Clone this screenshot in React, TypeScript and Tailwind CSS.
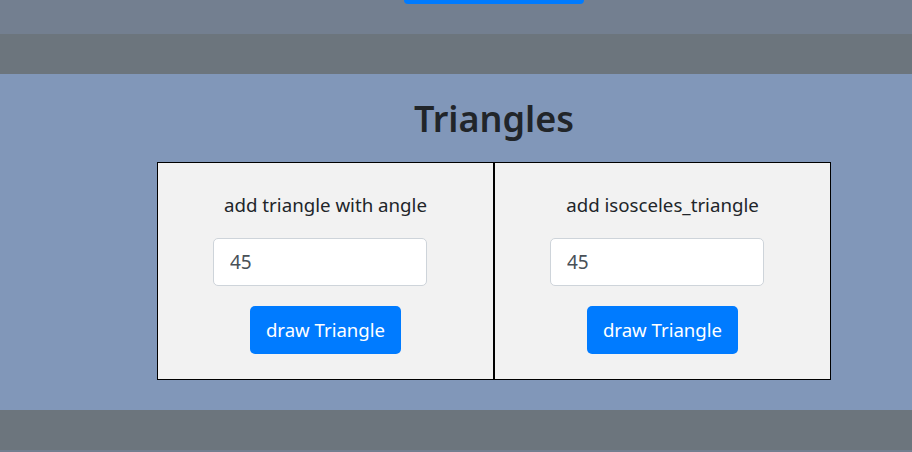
import React from "react";

function Card({ label }: { label: string }) {
  return (
    <div className="flex flex-col items-center border border-black bg-[#f2f2f2] pt-[27px] pb-[25px]">
      <div className="h-[30px] text-[18.7px] leading-[30px] text-[#212529]">{label}</div>
      <input
        defaultValue="45"
        className="mt-[18px] mr-[11px] h-[48px] w-[214px] rounded-[5px] border border-[#ced4da] bg-white px-4 text-[19px] text-[#495057] outline-none"
      />
      <button className="mt-[20px] h-[48px] w-[151px] rounded-[5px] bg-[#007bff] text-[18.6px] text-white">
        draw Triangle
      </button>
    </div>
  );
}

export default function App() {
  return (
    <div
      className="min-h-[452px] w-[912px] bg-[#6c757d]"
      style={{ fontFamily: '"Noto Sans", "Open Sans", sans-serif' }}
    >
      <div className="flex h-[34px] justify-center bg-[#737f90] pl-[76px]">
        <div className="h-[4px] w-[180px] rounded-b-[4px] bg-[#007bff]" />
      </div>
      <div className="h-[40px] bg-[#6c757d]" />
      <div className="flex flex-col items-center bg-[#8197b9] pb-[30px] pl-[76px] pt-[20px]">
        <h1 className="h-[48px] text-[36px] font-semibold leading-[50px] text-[#212529]">Triangles</h1>
        <div className="mt-[20px] grid w-[674px] grid-cols-2">
          <Card label="add triangle with angle" />
          <Card label="add isosceles_triangle" />
        </div>
      </div>
      <div className="h-[40px] bg-[#6c757d]" />
      <div className="h-[2px] bg-[#737f90]" />
    </div>
  );
}
